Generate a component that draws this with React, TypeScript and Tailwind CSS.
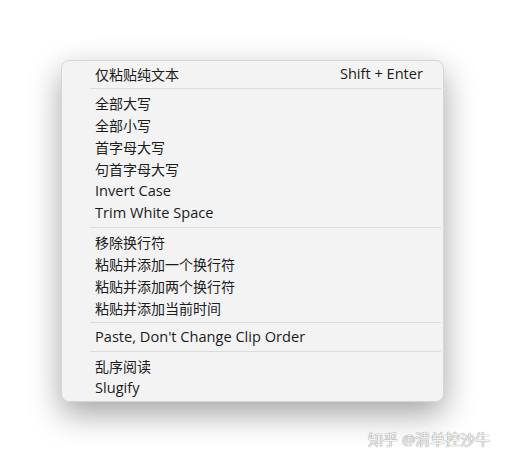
const font = { fontFamily: '"Open Sans", "Noto Sans CJK SC", sans-serif' }

type Entry = { label: string; shortcut?: string } | 'sep'

const entries: Entry[] = [
  { label: '仅粘贴纯文本', shortcut: 'Shift + Enter' },
  'sep',
  { label: '全部大写' },
  { label: '全部小写' },
  { label: '首字母大写' },
  { label: '句首字母大写' },
  { label: 'Invert Case' },
  { label: 'Trim White Space' },
  'sep',
  { label: '移除换行符' },
  { label: '粘贴并添加一个换行符' },
  { label: '粘贴并添加两个换行符' },
  { label: '粘贴并添加当前时间' },
  'sep',
  { label: "Paste, Don't Change Clip Order" },
  'sep',
  { label: '乱序阅读' },
  { label: 'Slugify' },
]

// latin labels render a touch wider than the CJK ones
const isLatin = (s: string) => /^[\x20-\x7e]+$/.test(s)

export default function App() {
  return (
    <div className="relative w-[505px] h-[462px] bg-white overflow-hidden" style={font}>
      <div className="pt-[60px] pl-[61px]">
        <div className="w-[383px] rounded-[8px] border border-[#d6d6d6] bg-[#f3f3f3] pt-[2px] pb-[2px] shadow-[0_12px_32px_rgba(0,0,0,0.36)]">
          {entries.map((e, i) =>
            e === 'sep' ? (
              <div key={i} className="my-[3px] ml-[28px] mr-[2px] h-px bg-[#dcdcdc]" />
            ) : (
              <div key={i} className="flex h-[22px] items-center justify-between pl-[33px] pr-[20px] text-[14px] text-[#1b1b1b]">
                <span className={isLatin(e.label) ? 'text-[14.6px]' : undefined}>{e.label}</span>
                {e.shortcut && <span className="text-[14.6px]">{e.shortcut}</span>}
              </div>
            )
          )}
        </div>
      </div>
      <div className="absolute left-[368px] top-[428px] text-[15px] text-[#f4f4f4] [text-shadow:0_0_1px_#8a8a8a,0_0_1px_#8a8a8a]">
        知乎 @清单控沙牛
      </div>
    </div>
  )
}
